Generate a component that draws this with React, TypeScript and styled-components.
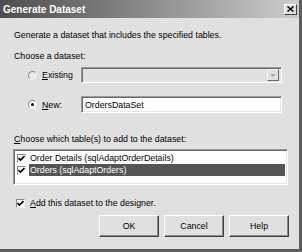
import styled, { createGlobalStyle } from "styled-components";

const GlobalStyle = createGlobalStyle`
	html, body {
		margin: 0;
		padding: 0;
		background: #ffffff;
	}
	body {
		font-family: "Liberation Sans", Arial, sans-serif;
		font-size: 8.8px;
		color: #000;
	}
`;

const Window = styled.div`
	width: 302px;
	height: 252px;
	box-sizing: border-box;
	background: #e0e0e0;
	border-right: 3px solid #5c5c5c;
	border-bottom: 3px solid #5c5c5c;
	display: flex;
	flex-direction: column;
`;

const TitleBar = styled.div`
	height: 18px;
	flex: none;
	display: flex;
	align-items: center;
	justify-content: space-between;
	padding: 0 2px 0 3px;
	background: linear-gradient(to right, #4e4e4e 0%, #8c8c8c 50%, #cdcdcd 100%);
`;

const Title = styled.span`
	color: #fff;
	font-weight: bold;
	font-size: 10px;
`;

const CloseButton = styled.div`
	width: 13px;
	height: 11px;
	box-sizing: border-box;
	background: #e0e0e0;
	border: 1px solid;
	border-color: #fff #404040 #404040 #fff;
	display: flex;
	align-items: center;
	justify-content: center;
`;

const Body = styled.div`
	display: flex;
	flex-direction: column;
	padding: 0 0 0 14px;
`;

const Text = styled.div<{ $top: number }>`
	height: 12px;
	line-height: 12px;
	margin-top: ${(p) => p.$top}px;
	white-space: nowrap;
`;

const OptionRow = styled.div<{ $top: number; $h: number }>`
	display: flex;
	align-items: center;
	height: ${(p) => p.$h}px;
	margin-top: ${(p) => p.$top}px;
	padding-left: 14px;
`;

const Radio = styled.div<{ $on?: boolean; $dim?: boolean }>`
	width: 9px;
	height: 9px;
	box-sizing: border-box;
	border-radius: 50%;
	border: 1px solid;
	border-color: #8a8a8a #f4f4f4 #f4f4f4 #8a8a8a;
	background: ${(p) => (p.$dim ? "#ececec" : "#fff")};
	display: flex;
	align-items: center;
	justify-content: center;
	&::after {
		content: "";
		width: 3px;
		height: 3px;
		border-radius: 50%;
		background: ${(p) => (p.$on ? "#000" : "transparent")};
	}
`;

const OptionLabel = styled.span`
	width: 39px;
	margin-left: 5px;
	flex: none;
`;

const Key = styled.span`
	text-decoration: underline;
`;

const Field = styled.div<{ $disabled?: boolean }>`
	width: 201px;
	height: 100%;
	box-sizing: border-box;
	border: 1px solid;
	border-color: #9a9a9a #fff #fff #9a9a9a;
	box-shadow: inset 1px 1px #6a6a6a, inset -1px -1px #e6e6e6;
	background: ${(p) => (p.$disabled ? "#e0e0e0" : "#fff")};
	display: flex;
	align-items: center;
	justify-content: flex-end;
	padding: 2px 2px 2px 3px;
	white-space: nowrap;
	& > span {
		flex: 1;
	}
`;

const DropButton = styled.div`
	width: 12px;
	height: 12px;
	box-sizing: border-box;
	background: #e0e0e0;
	border: 1px solid;
	border-color: #f4f4f4 #6a6a6a #6a6a6a #f4f4f4;
	display: flex;
	align-items: center;
	justify-content: center;
	&::after {
		content: "";
		border-left: 3px solid transparent;
		border-right: 3px solid transparent;
		border-top: 3px solid #a8a8a8;
	}
`;

const ListBox = styled.div`
	margin: 4px 0 0 -1px;
	width: 275px;
	height: 36px;
	box-sizing: border-box;
	border: 1px solid;
	border-color: #9a9a9a #fff #fff #9a9a9a;
	box-shadow: inset 1px 1px #6a6a6a, inset -1px -1px #e6e6e6;
	background: #fff;
	padding: 2px 2px 2px 3px;
	display: flex;
	flex-direction: column;
`;

const ListRow = styled.div<{ $selected?: boolean }>`
	height: 12px;
	display: flex;
	align-items: center;
	& > span {
		flex: 1;
		height: 12px;
		line-height: 12px;
		margin-left: 3px;
		padding-left: 1px;
		white-space: nowrap;
		background: ${(p) => (p.$selected ? "#545454" : "transparent")};
		color: ${(p) => (p.$selected ? "#fff" : "#000")};
	}
`;

const CheckBox = styled.div`
	width: 9px;
	height: 9px;
	flex: none;
	box-sizing: border-box;
	border: 1px solid;
	border-color: #8a8a8a #f4f4f4 #f4f4f4 #8a8a8a;
	background: #fff;
	display: flex;
	align-items: center;
	justify-content: center;
`;

const AddRow = styled.div`
	display: flex;
	align-items: center;
	height: 12px;
	margin: 12px 0 0 2px;
	& > span {
		margin-left: 5px;
	}
`;

const ButtonRow = styled.div`
	display: flex;
	justify-content: flex-end;
	gap: 5px;
	margin-top: 6px;
	padding-right: 10px;
`;

const Button = styled.div`
	width: 60px;
	height: 22px;
	box-sizing: border-box;
	background: #e0e0e0;
	border: 1px solid;
	border-color: #fff #404040 #404040 #fff;
	box-shadow: inset -1px -1px #8a8a8a;
	display: flex;
	align-items: center;
	justify-content: center;
`;

function Check() {
	return (
		<svg width="7" height="7" viewBox="0 0 7 7">
			<path d="M0.5 3 L2.5 5 L6.5 1" stroke="#000" strokeWidth="1.6" fill="none" />
		</svg>
	);
}

function App() {
	return (
		<>
			<GlobalStyle />
			<Window>
				<TitleBar>
					<Title>Generate Dataset</Title>
					<CloseButton>
						<svg width="7" height="6" viewBox="0 0 7 6">
							<path d="M0.5 0.5 L6.5 5.5 M6.5 0.5 L0.5 5.5" stroke="#000" strokeWidth="1.5" />
						</svg>
					</CloseButton>
				</TitleBar>
				<Body>
					<Text $top={11}>Generate a dataset that includes the specified tables.</Text>
					<Text $top={9}>Choose a dataset:</Text>
					<OptionRow $top={5} $h={16}>
						<Radio $dim />
						<OptionLabel>
							<Key>E</Key>xisting
						</OptionLabel>
						<Field $disabled>
							<DropButton />
						</Field>
					</OptionRow>
					<OptionRow $top={13} $h={17}>
						<Radio $on />
						<OptionLabel>
							<Key>N</Key>ew:
						</OptionLabel>
						<Field>
							<span>OrdersDataSet</span>
						</Field>
					</OptionRow>
					<Text $top={20}>
						<Key>C</Key>hoose which table(s) to add to the dataset:
					</Text>
					<ListBox>
						<ListRow>
							<CheckBox>
								<Check />
							</CheckBox>
							<span>Order Details (sqlAdaptOrderDetails)</span>
						</ListRow>
						<ListRow $selected>
							<CheckBox>
								<Check />
							</CheckBox>
							<span>Orders (sqlAdaptOrders)</span>
						</ListRow>
					</ListBox>
					<AddRow>
						<CheckBox>
							<Check />
						</CheckBox>
						<span>
							<Key>A</Key>dd this dataset to the designer.
						</span>
					</AddRow>
					<ButtonRow>
						<Button>OK</Button>
						<Button>Cancel</Button>
						<Button>Help</Button>
					</ButtonRow>
				</Body>
			</Window>
		</>
	);
}

export default App;
